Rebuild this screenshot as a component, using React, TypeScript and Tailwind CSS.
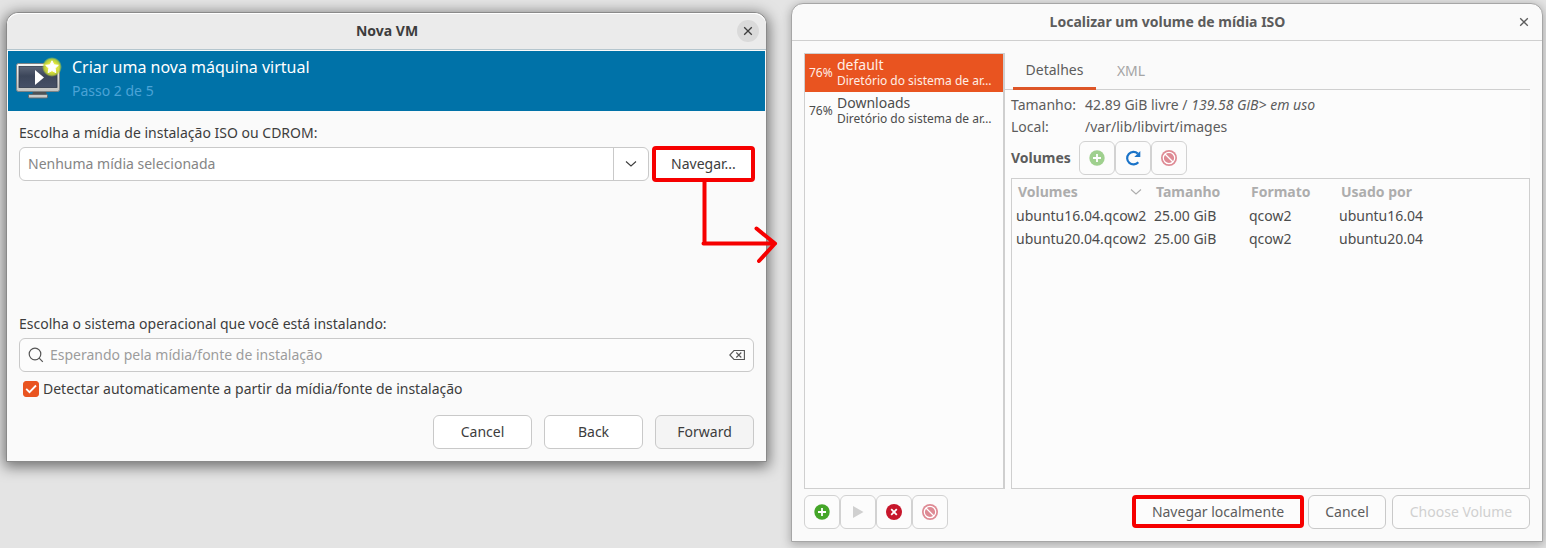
import { useState, type ReactNode } from 'react';

const buttonBase =
  'flex h-[34px] items-center justify-center rounded-md border border-[#c9c9c9] text-center';
const toolButton =
  'flex h-[34px] w-9 items-center justify-center rounded-md border border-[#d2d2d2] bg-[#fcfcfc]';

function CloseIcon() {
  return (
    <svg width="10" height="10" viewBox="0 0 10 10" fill="none" stroke="currentColor" strokeWidth="1.3">
      <path d="M1.200 1.200l7.600 7.600M8.800 1.200l-7.600 7.600" />
    </svg>
  );
}

function ChevronDown() {
  return (
    <svg width="12" height="8" viewBox="0 0 12 8" fill="none" stroke="currentColor" strokeWidth="1.1">
      <path d="M1 1.500l5 4.500 5-4.500" />
    </svg>
  );
}

function MachineIcon() {
  return (
    <svg width="48" height="48" viewBox="0 0 48 48" aria-hidden="true">
      <defs>
        <linearGradient id="frame" x1="0" y1="0" x2="0" y2="1">
          <stop offset="0" stopColor="#f6f6f4" />
          <stop offset="1" stopColor="#c2c3c0" />
        </linearGradient>
        <linearGradient id="screen" x1="0" y1="0" x2="0" y2="1">
          <stop offset="0" stopColor="#5d6678" />
          <stop offset="0.45" stopColor="#3c465a" />
          <stop offset="1" stopColor="#465066" />
        </linearGradient>
        <radialGradient id="glow">
          <stop offset="0" stopColor="#fdfcc0" />
          <stop offset="0.45" stopColor="#e6ea3c" />
          <stop offset="0.8" stopColor="#c6d832" stopOpacity="0.85" />
          <stop offset="1" stopColor="#b4cf3a" stopOpacity="0" />
        </radialGradient>
      </defs>
      <path d="M18 36h13l1 5H17z" fill="#4d5256" />
      <rect x="13.500" y="39.500" width="19" height="3.500" rx="1" fill="#c9cac8" stroke="#62696d" />
      <rect x="1.500" y="8.500" width="43" height="28" rx="2" fill="url(#frame)" stroke="#7c8386" />
      <rect x="4" y="11.500" width="38" height="21" fill="url(#screen)" stroke="#30394a" strokeWidth="0.8" />
      <path d="M20 15v15l9-7.500z" fill="#fff" />
      <circle cx="37" cy="12" r="10" fill="url(#glow)" />
      <path
        d="M37 5.800l1.900 4 4.400.5-3.200 3 .8 4.400-3.900-2.100-3.900 2.100.8-4.400-3.200-3 4.400-.5z"
        fill="#fff"
        stroke="#fff"
        strokeLinejoin="round"
      />
    </svg>
  );
}

function AddIcon({ color }: { color: string }) {
  return (
    <svg width="16" height="16" viewBox="0 0 16 16" aria-hidden="true">
      <circle cx="8" cy="8" r="7.700" fill={color} />
      <path d="M8 4v8M4 8h8" stroke="#fff" strokeWidth="1.800" />
    </svg>
  );
}

function StopIcon() {
  return (
    <svg width="16" height="16" viewBox="0 0 16 16" aria-hidden="true">
      <circle cx="8" cy="8" r="8" fill="#c7162b" />
      <path d="M5.200 5.200l5.600 5.600M10.800 5.200l-5.600 5.600" stroke="#fff" strokeWidth="1.800" />
    </svg>
  );
}

function ForbiddenIcon() {
  return (
    <svg width="16" height="16" viewBox="0 0 16 16" aria-hidden="true">
      <circle cx="8" cy="8" r="8" fill="#de8a94" />
      <circle cx="8" cy="8" r="5.700" fill="none" stroke="#fff" strokeWidth="1.200" />
      <path d="M4 4l8 8" stroke="#fff" strokeWidth="1.200" />
    </svg>
  );
}

function RefreshIcon() {
  return (
    <svg width="18" height="18" viewBox="0 0 18 18" fill="none" aria-hidden="true">
      <path d="M13.800 4.600A6.300 6.300 0 1 0 14.300 13.200" stroke="#1a73c8" strokeWidth="2.200" />
      <path d="M16.300 2v6h-6z" fill="#1a73c8" />
    </svg>
  );
}

function PlayIcon() {
  return (
    <svg width="16" height="16" viewBox="0 0 16 16" aria-hidden="true">
      <path d="M3 2v12l10.500-6z" fill="#d0d0d0" />
    </svg>
  );
}

function FlowArrow() {
  return (
    <svg
      className="pointer-events-none absolute top-full left-[44px] z-10"
      width="84"
      height="84"
      viewBox="0 0 84 84"
      fill="none"
      stroke="#f60000"
      strokeWidth="4"
      strokeLinecap="round"
      strokeLinejoin="round"
      aria-hidden="true"
    >
      <path d="M8.500 -2V61.500M7.500 61.500H79M60.500 46.500L79 61.500L63 79" />
    </svg>
  );
}

function NewMachineWindow() {
  const [detect, setDetect] = useState(true);
  return (
    <section className="mt-3 rounded-t-xl border border-[#8a8a8a] bg-[#fafafa] shadow-[0_3px_14px_2px_rgba(0,0,0,0.5)]">
      <header className="grid h-[37px] grid-cols-[1fr_auto_1fr] items-center rounded-t-xl border-b border-[#b5c6ce] bg-[#ebebeb] pr-[7px] pl-2 shadow-[inset_0_1px_0_#fff]">
        <h1 className="col-start-2 text-sm font-bold">Nova VM</h1>
        <button
          aria-label="Fechar"
          className="flex size-[22px] items-center justify-center justify-self-end rounded-full bg-[#dadada]"
        >
          <CloseIcon />
        </button>
      </header>
      <div className="mx-px mt-px flex h-[60px] gap-2 bg-[#0072a8] pl-[7px]">
        <div className="pt-1">
          <MachineIcon />
        </div>
        <div className="pt-1 pl-px">
          <p className="text-base leading-6 text-white">Criar uma nova máquina virtual</p>
          <p className="text-sm leading-6 text-[#4ba3d6]">Passo 2 de 5</p>
        </div>
      </div>
      <div className="flex flex-col p-3 text-sm leading-5">
        <label htmlFor="media">Escolha a mídia de instalação ISO ou CDROM:</label>
        <div className="mt-[3px] flex items-center gap-[3px]">
          <div className="flex h-[34px] grow overflow-hidden rounded-md border border-[#c9c9c9] bg-white">
            <input
              id="media"
              placeholder="Nenhuma mídia selecionada"
              className="min-w-0 grow px-2 outline-none placeholder:text-[#858585]"
            />
            <button
              aria-label="Mostrar mídias"
              className="flex w-[35px] items-center justify-center border-l border-[#c9c9c9]"
            >
              <ChevronDown />
            </button>
          </div>
          <div className="relative -mr-px">
            <button className="block h-9 w-[103px] rounded-sm border-4 border-[#f60000] bg-white">Navegar...</button>
            <FlowArrow />
          </div>
        </div>
        <label htmlFor="system" className="mt-[132px]">
          Escolha o sistema operacional que você está instalando:
        </label>
        <div className="mt-1 flex h-[34px] items-center rounded-md border border-[#c9c9c9] bg-[#fcfcfc] px-2">
          <svg width="16" height="16" viewBox="0 0 16 16" fill="none" stroke="#555" strokeWidth="1.200">
            <circle cx="7" cy="7" r="5.800" />
            <path d="M11.200 11.200l3.600 3.600" />
          </svg>
          <input
            id="system"
            placeholder="Esperando pela mídia/fonte de instalação"
            className="min-w-0 grow px-1.5 outline-none placeholder:text-[#9c9c9c]"
          />
          <button aria-label="Limpar">
            <svg width="16" height="12" viewBox="0 0 16 12" fill="none" stroke="#555" strokeWidth="1.100">
              <path d="M5 1.500h10.400v9H5L.8 6z" />
              <path d="M7.300 3.500l5 5M12.300 3.500l-5 5" />
            </svg>
          </button>
        </div>
        <label className="mt-[7px] flex items-center gap-1 pl-1">
          <span className="grid size-4 place-items-center">
            <input
              type="checkbox"
              checked={detect}
              onChange={() => setDetect(!detect)}
              className="col-start-1 row-start-1 size-4 appearance-none rounded-[3px] border border-[#e95420] bg-white checked:bg-[#e95420]"
            />
            <svg
              className="pointer-events-none col-start-1 row-start-1"
              width="12"
              height="10"
              viewBox="0 0 12 10"
              fill="none"
              stroke="#fff"
              strokeWidth="1.800"
            >
              <path d="M1.200 4.800l3.300 3.300L11 1.500" />
            </svg>
          </span>
          Detectar automaticamente a partir da mídia/fonte de instalação
        </label>
        <div className="mt-4 flex justify-end gap-3">
          <button className={`${buttonBase} w-[99px] bg-white`}>Cancel</button>
          <button className={`${buttonBase} w-[99px] bg-white`}>Back</button>
          <button className={`${buttonBase} w-[99px] bg-[#f4f4f4]`}>Forward</button>
        </div>
      </div>
    </section>
  );
}

function Pool({ name, selected }: { name: string; selected?: boolean }) {
  return (
    <li
      className={
        selected
          ? 'flex h-[38px] items-center gap-1 bg-[#e95420] pl-1 text-[#ffeee6]'
          : 'flex h-[38px] items-center gap-1 pl-1 text-[#4c4c4c]'
      }
    >
      <span className="w-6 text-xs">76%</span>
      <span className="flex flex-col whitespace-nowrap">
        <span className="text-sm leading-4">{name}</span>
        <span className="text-xs leading-4">Diretório do sistema de ar…</span>
      </span>
    </li>
  );
}

function Detail({ label, children }: { label: string; children: ReactNode }) {
  return (
    <div className="flex">
      <dt className="w-[74px]">{label}</dt>
      <dd>{children}</dd>
    </div>
  );
}

const volumes = [
  { name: 'ubuntu16.04.qcow2', size: '25.00 GiB', format: 'qcow2', user: 'ubuntu16.04' },
  { name: 'ubuntu20.04.qcow2', size: '25.00 GiB', format: 'qcow2', user: 'ubuntu20.04' },
];

function VolumeWindow() {
  return (
    <section className="mt-[3px] rounded-t-xl border border-[#a6a6a6] bg-[#fafafa] text-[#5c5c5c] shadow-[0_2px_10px_1px_rgba(0,0,0,0.25)]">
      <header className="grid h-[37px] grid-cols-[1fr_auto_1fr] items-center rounded-t-xl border-b border-[#cfcfcf] pr-[7px] pl-2">
        <h1 className="col-start-2 text-sm font-bold">Localizar um volume de mídia ISO</h1>
        <button aria-label="Fechar" className="flex size-[22px] items-center justify-center justify-self-end">
          <CloseIcon />
        </button>
      </header>
      <div className="flex flex-col gap-1.5 p-3 text-sm">
        <div className="flex h-[436px]">
          <ul className="w-[201px] shrink-0 border border-r-2 border-[#cfcfcf] bg-[#fcfcfc]">
            <Pool name="default" selected />
            <Pool name="Downloads" />
          </ul>
          <div className="flex min-w-0 grow flex-col">
            <div role="tablist" className="flex h-[37px] border-b border-[#cfcfcf] pl-2">
              <button
                role="tab"
                aria-selected="true"
                className="-mb-px w-[83px] border-b-3 border-[#dd5527] text-[#5c5c5c]"
              >
                Detalhes
              </button>
              <button role="tab" aria-selected="false" className="w-[70px] text-[#a5a5a5]">
                XML
              </button>
            </div>
            <div className="flex grow flex-col bg-[#fcfcfc] pl-1.5">
              <dl className="pt-1 leading-[22px]">
                <Detail label="Tamanho:">
                  42.89 GiB livre / <em>139.58 GiB&gt; em uso</em>
                </Detail>
                <Detail label="Local:">/var/lib/libvirt/images</Detail>
              </dl>
              <div className="mt-[3px] flex items-center">
                <h2 className="w-[68px] font-bold">Volumes</h2>
                <button aria-label="Adicionar volume" className={toolButton}>
                  <AddIcon color="#9fd08e" />
                </button>
                <button aria-label="Atualizar volumes" className={toolButton}>
                  <RefreshIcon />
                </button>
                <button aria-label="Excluir volume" className={toolButton}>
                  <ForbiddenIcon />
                </button>
              </div>
              <div className="mt-[3px] grow border border-[#cfcfcf]">
                <table className="w-full table-fixed text-left">
                  <colgroup>
                    <col className="w-[138px]" />
                    <col className="w-[95px]" />
                    <col className="w-[90px]" />
                    <col />
                  </colgroup>
                  <thead>
                    <tr className="h-[25px] text-[#adadad]">
                      <th className="pl-1.5">
                        <span className="flex items-center justify-between pr-2">
                          Volumes <ChevronDown />
                        </span>
                      </th>
                      <th className="pl-1.5">Tamanho</th>
                      <th className="pl-1.5">Formato</th>
                      <th className="pl-1.5">Usado por</th>
                    </tr>
                  </thead>
                  <tbody className="text-[#4c4c4c]">
                    {volumes.map((v) => (
                      <tr key={v.name} className="h-[23px]">
                        <td className="pl-1 whitespace-nowrap">{v.name}</td>
                        <td className="pl-1">{v.size}</td>
                        <td className="pl-1">{v.format}</td>
                        <td className="pl-1">{v.user}</td>
                      </tr>
                    ))}
                  </tbody>
                </table>
              </div>
            </div>
          </div>
        </div>
        <div className="flex">
          <button aria-label="Adicionar pool" className={toolButton}>
            <AddIcon color="#45a629" />
          </button>
          <button aria-label="Iniciar pool" className={toolButton}>
            <PlayIcon />
          </button>
          <button aria-label="Parar pool" className={toolButton}>
            <StopIcon />
          </button>
          <button aria-label="Excluir pool" className={toolButton}>
            <ForbiddenIcon />
          </button>
          <button className="ml-auto h-[33px] w-[172px] rounded-sm border-4 border-[#f60000] bg-[#fcfcfc]">
            Navegar localmente
          </button>
          <button className={`${buttonBase} ml-1 w-[78px] bg-[#fcfcfc]`}>Cancel</button>
          <button disabled className={`${buttonBase} ml-1.5 w-[138px] bg-[#fcfcfc] text-[#d0d0d0]`}>
            Choose Volume
          </button>
        </div>
      </div>
    </section>
  );
}

export default function App() {
  return (
    <main className="grid min-h-screen grid-cols-[761fr_752fr] items-start gap-6 bg-[#e4e4e4] pr-[3px] pl-1.5 font-['Noto_Sans',sans-serif] text-[#3d3d3d]">
      <NewMachineWindow />
      <VolumeWindow />
    </main>
  );
}
